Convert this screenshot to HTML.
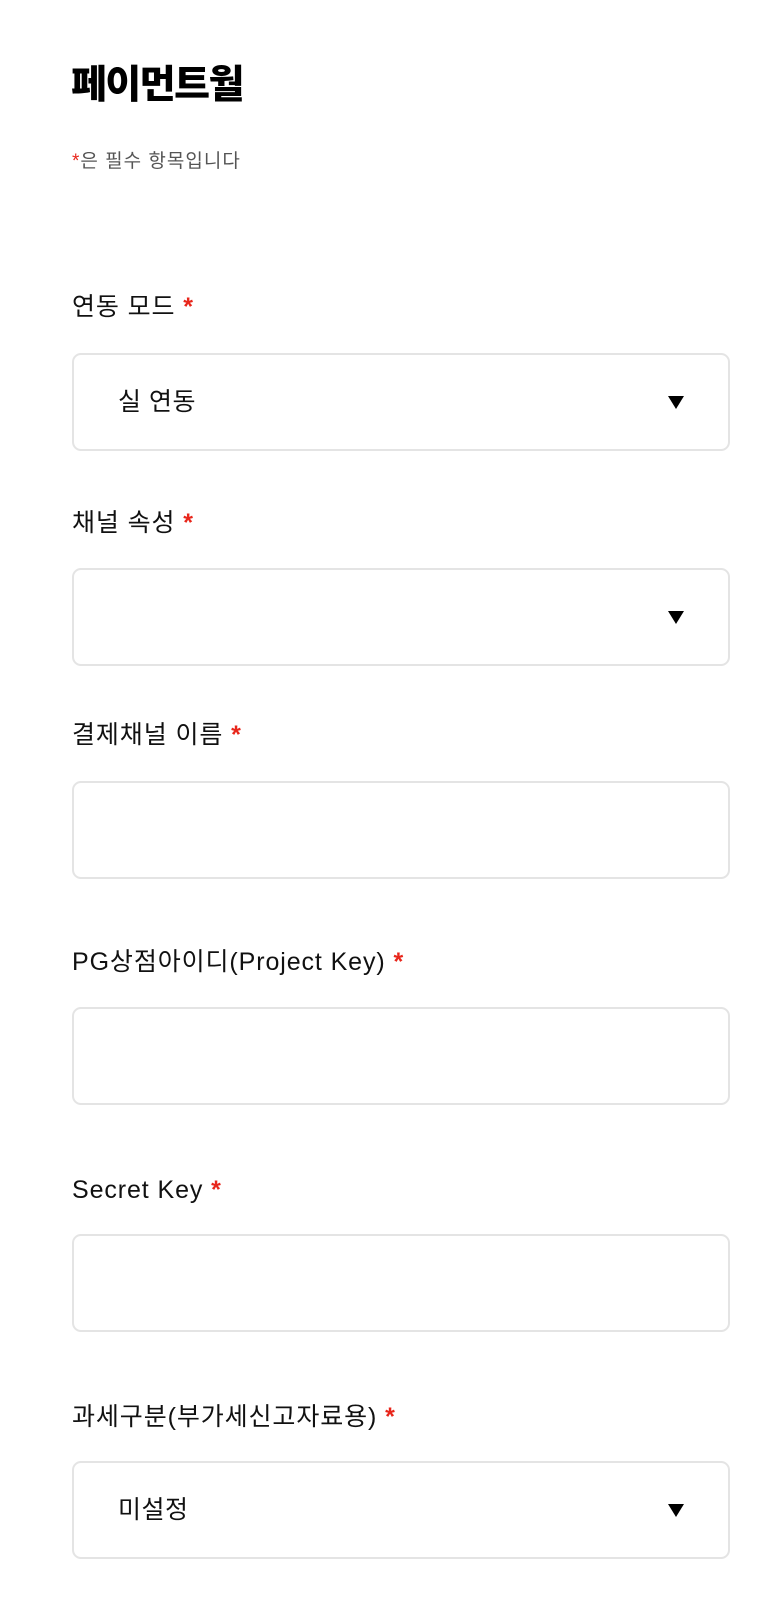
<!DOCTYPE html>
<html><head><meta charset="utf-8"><style>
*{margin:0;padding:0;box-sizing:border-box}
body{width:768px;height:1618px;background:#fff;font-family:"Liberation Sans","Noto Sans CJK KR",sans-serif;color:#111;position:relative;overflow:hidden}
.a{position:absolute;left:72px}
h1{position:absolute;left:71px;top:60px;font-size:39px;font-weight:900;letter-spacing:-1.5px;line-height:52px;color:#000}
.sub{top:149px;font-size:19px;color:#555;line-height:26px;letter-spacing:1px}
.r{color:#e8261b;font-weight:bold}
.lbl{font-size:25px;line-height:32px;color:#111;letter-spacing:0.9px}
.box{position:absolute;left:72px;width:658px;height:98px;border:2px solid #e4e4e4;border-radius:9px}
.val{position:absolute;left:44px;top:31px;font-size:25px;line-height:32px;color:#111;letter-spacing:0.5px}
.arr{position:absolute;right:44px;top:41px;width:0;height:0;border-left:8px solid transparent;border-right:8px solid transparent;border-top:13px solid #000}
</style></head><body>
<h1>페이먼트월</h1>
<div class="a sub"><span class="r" style="font-weight:normal">*</span>은 필수 항목입니다</div>

<div class="a lbl" style="top:291px">연동 모드 <span class="r">*</span></div>
<div class="box" style="top:353px"><div class="val">실 연동</div><div class="arr"></div></div>

<div class="a lbl" style="top:507px">채널 속성 <span class="r">*</span></div>
<div class="box" style="top:568px"><div class="arr"></div></div>

<div class="a lbl" style="top:719px">결제채널 이름 <span class="r">*</span></div>
<div class="box" style="top:781px"></div>

<div class="a lbl" style="top:946px">PG상점아이디(Project Key) <span class="r">*</span></div>
<div class="box" style="top:1007px"></div>

<div class="a lbl" style="top:1174px">Secret Key <span class="r">*</span></div>
<div class="box" style="top:1234px"></div>

<div class="a lbl" style="top:1401px">과세구분(부가세신고자료용) <span class="r">*</span></div>
<div class="box" style="top:1461px"><div class="val">미설정</div><div class="arr"></div></div>
</body></html>
